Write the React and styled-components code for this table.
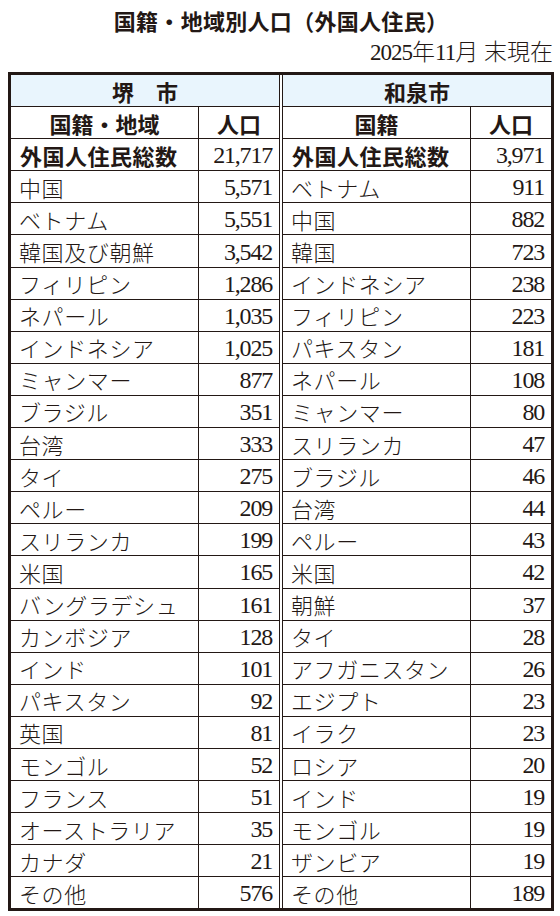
import React from "react";
import styled, { createGlobalStyle } from "styled-components";

const ink = "#231815";

const GlobalStyle = createGlobalStyle`
  body {
    margin: 0;
    background: #ffffff;
    color: ${ink};
    font-family: "Noto Sans CJK JP", "Noto Sans", sans-serif;
  }
`;

const Page = styled.div`
  width: 560px;
  padding: 0 6px 0 8px;
  box-sizing: border-box;
`;

const Title = styled.h1`
  margin: 0;
  padding-top: 8px;
  height: 36px;
  box-sizing: border-box;
  text-align: center;
  font-size: 22px;
  font-weight: 700;
  line-height: 24px;
  letter-spacing: 0.3px;
`;

const AsOf = styled.div`
  height: 36px;
  padding-top: 4px;
  box-sizing: border-box;
  text-align: right;
  font-family: "Liberation Serif", "Noto Sans CJK JP", serif;
  font-size: 23px;
  font-weight: 300;
  line-height: 26px;
  padding-right: 1px;

  span {
    letter-spacing: -1px;
  }
`;

const Frame = styled.div`
  display: grid;
  grid-template-columns: 269px 269px;
  column-gap: 2px;
  border: 3px solid ${ink};
  background: #ffffff;
`;

const Panel = styled.div`
  display: grid;
  grid-template-columns: 187px 1fr;
  grid-auto-rows: 31.1px;
  gap: 1px;
  background: ${ink};
  ${({ $side }) =>
    $side === "left"
      ? `border-right: 1px solid ${ink};`
      : `border-left: 1px solid ${ink};`}
`;

const CityHead = styled.div`
  grid-column: 1 / -1;
  background: #e9f5fd;
  display: flex;
  align-items: center;
  justify-content: center;
  font-size: 22px;
  font-weight: 700;
`;

const HeadCell = styled.div`
  background: #ffffff;
  display: flex;
  align-items: center;
  justify-content: center;
  font-size: 22px;
  font-weight: 700;
`;

const NameCell = styled.div`
  background: #ffffff;
  display: flex;
  align-items: center;
  padding-left: ${({ $bold }) => ($bold ? "9px" : "8px")};
  font-size: 22px;
  font-weight: ${({ $bold }) => ($bold ? 700 : 300)};
  letter-spacing: ${({ $bold }) => ($bold ? "0.5px" : "0.6px")};
  white-space: nowrap;
`;

const NumCell = styled.div`
  background: #ffffff;
  display: flex;
  align-items: center;
  justify-content: flex-end;
  padding-right: 7px;
  font-family: "Liberation Serif", serif;
  font-size: 24px;
  letter-spacing: -1.2px;
  padding-top: 2px;
`;

const sakai = [
  ["中国", "5,571"],
  ["ベトナム", "5,551"],
  ["韓国及び朝鮮", "3,542"],
  ["フィリピン", "1,286"],
  ["ネパール", "1,035"],
  ["インドネシア", "1,025"],
  ["ミャンマー", "877"],
  ["ブラジル", "351"],
  ["台湾", "333"],
  ["タイ", "275"],
  ["ペルー", "209"],
  ["スリランカ", "199"],
  ["米国", "165"],
  ["バングラデシュ", "161"],
  ["カンボジア", "128"],
  ["インド", "101"],
  ["パキスタン", "92"],
  ["英国", "81"],
  ["モンゴル", "52"],
  ["フランス", "51"],
  ["オーストラリア", "35"],
  ["カナダ", "21"],
  ["その他", "576"],
];

const izumi = [
  ["ベトナム", "911"],
  ["中国", "882"],
  ["韓国", "723"],
  ["インドネシア", "238"],
  ["フィリピン", "223"],
  ["パキスタン", "181"],
  ["ネパール", "108"],
  ["ミャンマー", "80"],
  ["スリランカ", "47"],
  ["ブラジル", "46"],
  ["台湾", "44"],
  ["ペルー", "43"],
  ["米国", "42"],
  ["朝鮮", "37"],
  ["タイ", "28"],
  ["アフガニスタン", "26"],
  ["エジプト", "23"],
  ["イラク", "23"],
  ["ロシア", "20"],
  ["インド", "19"],
  ["モンゴル", "19"],
  ["ザンビア", "19"],
  ["その他", "189"],
];

const CityTable = ({ side, city, label, total, rows }) => (
  <Panel $side={side}>
    <CityHead>{city}</CityHead>
    <HeadCell>{label}</HeadCell>
    <HeadCell>人口</HeadCell>
    <NameCell $bold>外国人住民総数</NameCell>
    <NumCell>{total}</NumCell>
    {rows.map(([name, count]) => (
      <React.Fragment key={name}>
        <NameCell>{name}</NameCell>
        <NumCell>{count}</NumCell>
      </React.Fragment>
    ))}
  </Panel>
);

export default function App() {
  return (
    <>
      <GlobalStyle />
      <Page>
        <Title>国籍・地域別人口（外国人住民）</Title>
        <AsOf>
          <span>2025</span>年<span>11</span>月 末現在
        </AsOf>
        <Frame>
          <CityTable side="left" city="堺　市" label="国籍・地域" total="21,717" rows={sakai} />
          <CityTable side="right" city="和泉市" label="国籍" total="3,971" rows={izumi} />
        </Frame>
      </Page>
    </>
  );
}
